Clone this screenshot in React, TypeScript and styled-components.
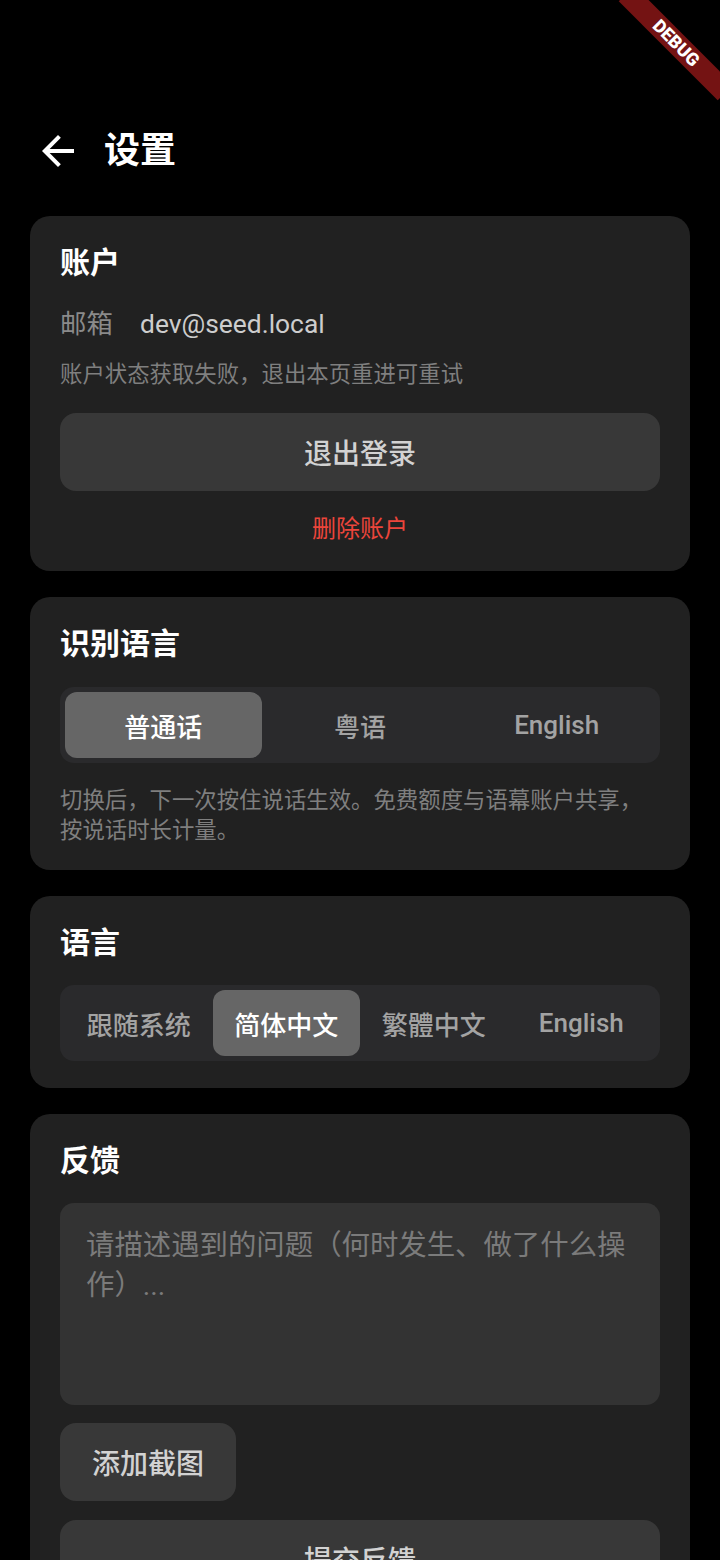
import styled, { createGlobalStyle } from "styled-components";

const GlobalStyle = createGlobalStyle`
  html, body {
    margin: 0;
    padding: 0;
    background: #000;
  }
  body {
    font-family: Roboto, "Noto Sans CJK SC", sans-serif;
    color: #fff;
    overflow: hidden;
  }
  * {
    box-sizing: border-box;
  }
`;

const Page = styled.div`
  position: relative;
  width: 720px;
  min-height: 1560px;
  padding: 112px 30px 40px;
  display: flex;
  flex-direction: column;
  gap: 26px;
`;

const Header = styled.header`
  height: 78px;
  display: flex;
  align-items: center;
`;

const BackButton = styled.button`
  width: 48px;
  height: 48px;
  margin-left: 4px;
  padding: 0;
  border: none;
  background: transparent;
  color: #fff;
  display: flex;
  align-items: center;
  justify-content: center;
`;

const PageTitle = styled.h1`
  margin: 0 0 0 22px;
  font-size: 36px;
  line-height: 44px;
  font-weight: 700;
`;

const Card = styled.section<{ $bottom?: number }>`
  background: #212121;
  border-radius: 20px;
  padding: 29px 30px ${(p) => p.$bottom ?? 25}px;
  display: flex;
  flex-direction: column;
`;

const CardTitle = styled.h2`
  margin: 0;
  font-size: 30px;
  line-height: 36px;
  font-weight: 700;
  color: #fff;
`;

const EmailRow = styled.div`
  margin-top: 25px;
  display: flex;
  font-size: 26.4px;
  line-height: 36px;
`;

const EmailLabel = styled.span`
  width: 80px;
  color: #8a8a8a;
`;

const EmailValue = styled.span`
  color: #cdcdcd;
`;

const Note = styled.p<{ $top: number }>`
  margin: ${(p) => p.$top}px 0 0;
  font-size: 22.4px;
  line-height: 30px;
  color: #7f7f7f;
`;

const Button = styled.button<{ $top: number; $wide?: boolean }>`
  margin-top: ${(p) => p.$top}px;
  height: 78px;
  padding: 0 32px;
  align-self: ${(p) => (p.$wide ? "stretch" : "flex-start")};
  border: none;
  border-radius: 16px;
  background: #383838;
  color: #d2d2d2;
  font-family: inherit;
  font-size: 28px;
  font-weight: 500;
`;

const DangerLink = styled.button`
  margin-top: 21px;
  border: none;
  background: transparent;
  padding: 0;
  font-family: inherit;
  font-size: 24px;
  line-height: 34px;
  color: #ec453b;
`;

const Segmented = styled.div<{ $count: number; $top: number }>`
  margin-top: ${(p) => p.$top}px;
  height: 76px;
  padding: 5px;
  border-radius: 14px;
  background: #2a2a2c;
  display: grid;
  grid-template-columns: repeat(${(p) => p.$count}, 1fr);
`;

const Segment = styled.button<{ $active?: boolean }>`
  border: none;
  border-radius: 12px;
  background: ${(p) => (p.$active ? "#666666" : "transparent")};
  color: ${(p) => (p.$active ? "#ffffff" : "#a3a3a3")};
  font-family: inherit;
  font-size: 26px;
  font-weight: 500;
  padding: 0;
`;

const FeedbackInput = styled.textarea`
  margin-top: 24px;
  height: 202px;
  padding: 23px 26px;
  border: none;
  border-radius: 14px;
  background: #333333;
  color: #ddd;
  font-family: inherit;
  font-size: 28.4px;
  line-height: 40px;
  resize: none;
  outline: none;
  &::placeholder {
    color: #7b7b7b;
  }
`;

const BannerClip = styled.div`
  position: absolute;
  top: 0;
  right: 0;
  width: 200px;
  height: 200px;
  overflow: hidden;
  pointer-events: none;
`;

const Banner = styled.div`
  position: absolute;
  left: 86px;
  top: 32px;
  width: 140px;
  height: 22px;
  transform: rotate(45deg);
  background: #741313;
  box-shadow: 0 0 3px rgba(0, 0, 0, 0.5);
  color: #fff;
  font-family: Roboto, sans-serif;
  font-size: 18px;
  font-weight: 900;
  line-height: 22px;
  text-align: center;
`;

function BackArrow() {
  return (
    <svg width="48" height="48" viewBox="0 0 24 24" fill="currentColor">
      <path d="M20 11H7.83l5.59-5.59L12 4l-8 8 8 8 1.41-1.41L7.83 13H20v-2z" />
    </svg>
  );
}

const asrOptions = ["普通话", "粤语", "English"];
const uiOptions = ["跟随系统", "简体中文", "繁體中文", "English"];

export default function App() {
  return (
    <>
      <GlobalStyle />
      <Page>
        <Header>
          <BackButton>
            <BackArrow />
          </BackButton>
          <PageTitle>设置</PageTitle>
        </Header>

        <Card>
          <CardTitle>账户</CardTitle>
          <EmailRow>
            <EmailLabel>邮箱</EmailLabel>
            <EmailValue>dev@seed.local</EmailValue>
          </EmailRow>
          <Note $top={17}>账户状态获取失败，退出本页重进可重试</Note>
          <Button $top={24} $wide>
            退出登录
          </Button>
          <DangerLink>删除账户</DangerLink>
        </Card>

        <Card>
          <CardTitle>识别语言</CardTitle>
          <Segmented $count={asrOptions.length} $top={25}>
            {asrOptions.map((o, i) => (
              <Segment key={o} $active={i === 0}>
                {o}
              </Segment>
            ))}
          </Segmented>
          <Note $top={22}>
            切换后，下一次按住说话生效。免费额度与语幕账户共享，按说话时长计量。
          </Note>
        </Card>

        <Card $bottom={27}>
          <CardTitle>语言</CardTitle>
          <Segmented $count={uiOptions.length} $top={24}>
            {uiOptions.map((o, i) => (
              <Segment key={o} $active={i === 1}>
                {o}
              </Segment>
            ))}
          </Segmented>
        </Card>

        <Card>
          <CardTitle>反馈</CardTitle>
          <FeedbackInput placeholder="请描述遇到的问题（何时发生、做了什么操作）..." />
          <Button $top={18}>添加截图</Button>
          <Button $top={19} $wide>
            提交反馈
          </Button>
        </Card>

        <BannerClip>
          <Banner>DEBUG</Banner>
        </BannerClip>
      </Page>
    </>
  );
}
